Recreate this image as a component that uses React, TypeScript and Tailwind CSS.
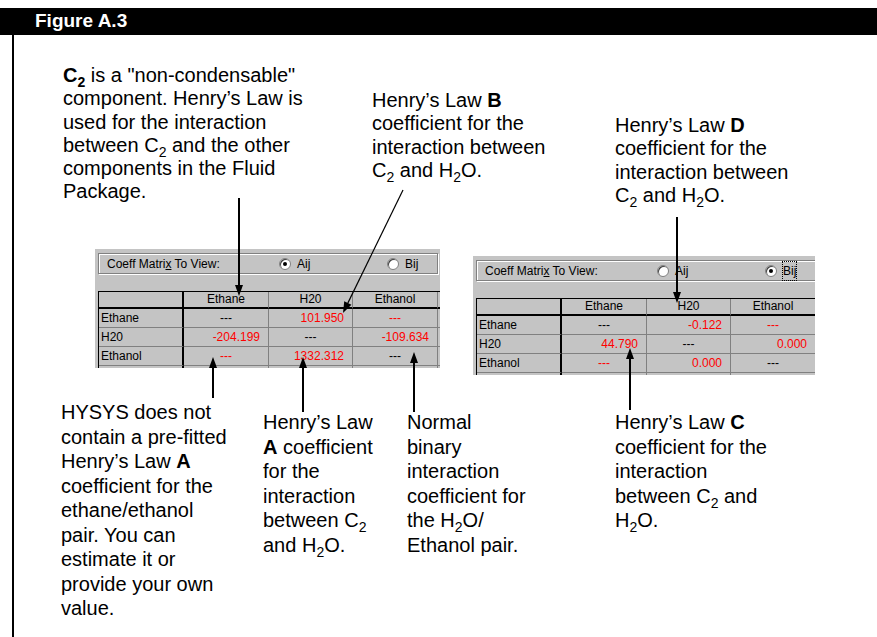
import React from 'react';

type Cell = { v: string; red?: boolean; right?: boolean };

const Sub = ({ children }: { children: React.ReactNode }) => (
  <span className="relative top-[5px] text-[14px] leading-none">{children}</span>
);

const Radio = ({ on }: { on: boolean }) => (
  <span className="relative inline-block w-[12px] h-[12px] rounded-full bg-white border border-[#808080] shadow-[inset_1px_1px_0_#404040]">
    {on && <span className="absolute left-[3px] top-[3px] w-[4px] h-[4px] rounded-full bg-black" />}
  </span>
);

function CoeffPanel({ sel, rows }: { sel: 'A' | 'B'; rows: Cell[][] }) {
  const heads = ['', 'Ethane', 'H20', 'Ethanol', ''];
  const labels = ['Ethane', 'H20', 'Ethanol', ''];
  return (
    <div className="w-full h-full bg-[#c4c4c4] pl-[3px] pt-[4px] overflow-hidden text-[12px] text-black">
      <div className="h-[21px] w-[340px] border border-[#808080] shadow-[inset_1px_1px_0_#fff,1px_1px_0_#fff] flex items-center">
        <span className="ml-[8px] w-[172px]">
          Coeff Matri<span className="underline">x</span> To View:
        </span>
        <span className="w-[108px] flex items-center gap-[6px]">
          <Radio on={sel === 'A'} />
          <span>Aij</span>
        </span>
        <span className="flex items-center gap-[6px]">
          <Radio on={sel === 'B'} />
          <span className={sel === 'B' ? 'outline outline-1 outline-dotted outline-black' : ''}>Bij</span>
        </span>
      </div>
      <div className="mt-[17px] grid grid-cols-[85px_85px_84px_85px_85px] border-t border-l border-black w-[420px]">
        {heads.map((h, i) => (
          <div
            key={'h' + i}
            className={`h-[17px] leading-[15px] text-center border-b-2 border-black ${i === 0 ? 'border-r-2 border-r-black' : 'border-r border-r-[#808080]'}`}
          >
            {h}
          </div>
        ))}
        {labels.map((lab, r) => (
          <React.Fragment key={'r' + r}>
            <div className="h-[19px] leading-[18px] pl-[2px] border-b border-[#808080] border-r-2 border-r-black">{lab}</div>
            {[0, 1, 2, 3].map((c) => {
              const cell = rows[r]?.[c];
              return (
                <div
                  key={c}
                  className={`h-[19px] leading-[18px] border-b border-r border-[#808080] ${cell?.right ? 'text-right pr-[8px]' : 'text-center'} ${cell?.red ? 'text-[#ff0000]' : 'text-black'}`}
                >
                  {cell?.v ?? ''}
                </div>
              );
            })}
          </React.Fragment>
        ))}
      </div>
    </div>
  );
}

function Arrow({ x1, y1, x2, y2, w = 2 }: { x1: number; y1: number; x2: number; y2: number; w?: number }) {
  const a = Math.atan2(y2 - y1, x2 - x1);
  const len = 11;
  const hw = 4;
  const bx = x2 - len * Math.cos(a);
  const by = y2 - len * Math.sin(a);
  const px = -Math.sin(a) * hw;
  const py = Math.cos(a) * hw;
  return (
    <g>
      <line x1={x1} y1={y1} x2={bx} y2={by} stroke="black" strokeWidth={w} />
      <polygon points={`${x2},${y2} ${bx + px},${by + py} ${bx - px},${by - py}`} fill="black" />
    </g>
  );
}

const A: Cell[][] = [
  [{ v: '---' }, { v: '101.950', red: true, right: true }, { v: '---', red: true }],
  [{ v: '-204.199', red: true, right: true }, { v: '---' }, { v: '-109.634', red: true, right: true }],
  [{ v: '---', red: true }, { v: '1332.312', red: true, right: true }, { v: '---' }],
];

const B: Cell[][] = [
  [{ v: '---' }, { v: '-0.122', red: true, right: true }, { v: '---', red: true }],
  [{ v: '44.790', red: true, right: true }, { v: '---' }, { v: '0.000', red: true, right: true }],
  [{ v: '---', red: true }, { v: '0.000', red: true, right: true }, { v: '---' }],
];

export default function App() {
  return (
    <div className="relative w-[877px] h-[637px] overflow-hidden bg-white font-['Liberation_Sans',Arial,sans-serif] text-black">
      <div className="mt-[8px] h-[27px] bg-black flex items-center pl-[35px] text-white font-bold text-[19px]">
        Figure A.3
      </div>
      <div className="ml-[12px] h-[602px] border-l-2 border-black">
        <div className="h-[214px] flex items-start text-[20px] leading-[23.3px] whitespace-nowrap">
          <p className="ml-[49px] mt-[29px] w-[309px]">
            <b>
              C<Sub>2</Sub>
            </b>{' '}
            is a "non-condensable"
            <br />
            component. Henry’s Law is
            <br />
            used for the interaction
            <br />
            between C<Sub>2</Sub> and the other
            <br />
            components in the Fluid
            <br />
            Package.
          </p>
          <p className="mt-[54px] w-[243px]">
            Henry’s Law <b>B</b>
            <br />
            coefficient for the
            <br />
            interaction between
            <br />
            C<Sub>2</Sub> and H<Sub>2</Sub>O.
          </p>
          <p className="mt-[79px]">
            Henry’s Law <b>D</b>
            <br />
            coefficient for the
            <br />
            interaction between
            <br />
            C<Sub>2</Sub> and H<Sub>2</Sub>O.
          </p>
        </div>
        <div className="flex items-start">
          <div className="ml-[81px] w-[345px] h-[119px]">
            <CoeffPanel sel="A" rows={A} />
          </div>
          <div className="ml-[33px] mt-[7px] w-[342px] h-[119px]">
            <CoeffPanel sel="B" rows={B} />
          </div>
        </div>
        <div className="flex items-start text-[20px] leading-[24.5px] whitespace-nowrap">
          <p className="ml-[47px] mt-[25px] w-[202px]">
            HYSYS does not
            <br />
            contain a pre-fitted
            <br />
            Henry’s Law <b>A</b>
            <br />
            coefficient for the
            <br />
            ethane/ethanol
            <br />
            pair. You can
            <br />
            estimate it or
            <br />
            provide your own
            <br />
            value.
          </p>
          <p className="mt-[35px] w-[144px]">
            Henry’s Law
            <br />
            <b>A</b> coefficient
            <br />
            for the
            <br />
            interaction
            <br />
            between C<Sub>2</Sub>
            <br />
            and H<Sub>2</Sub>O.
          </p>
          <p className="mt-[35px] w-[208px]">
            Normal
            <br />
            binary
            <br />
            interaction
            <br />
            coefficient for
            <br />
            the H<Sub>2</Sub>O/
            <br />
            Ethanol pair.
          </p>
          <p className="mt-[35px]">
            Henry’s Law <b>C</b>
            <br />
            coefficient for the
            <br />
            interaction
            <br />
            between C<Sub>2</Sub> and
            <br />
            H<Sub>2</Sub>O.
          </p>
        </div>
      </div>
      <svg className="absolute inset-0 pointer-events-none" width="877" height="637">
        <Arrow x1={239} y1={198} x2={239} y2={296} />
        <Arrow x1={403} y1={190} x2={343} y2={313} w={1.2} />
        <Arrow x1={677} y1={217} x2={677} y2={303} />
        <Arrow x1={213} y1={398} x2={213} y2={357} />
        <Arrow x1={303} y1={412} x2={303} y2={357} />
        <Arrow x1={414} y1={412} x2={414} y2={352} />
        <Arrow x1={630} y1={410} x2={630} y2={348} />
      </svg>
    </div>
  );
}
